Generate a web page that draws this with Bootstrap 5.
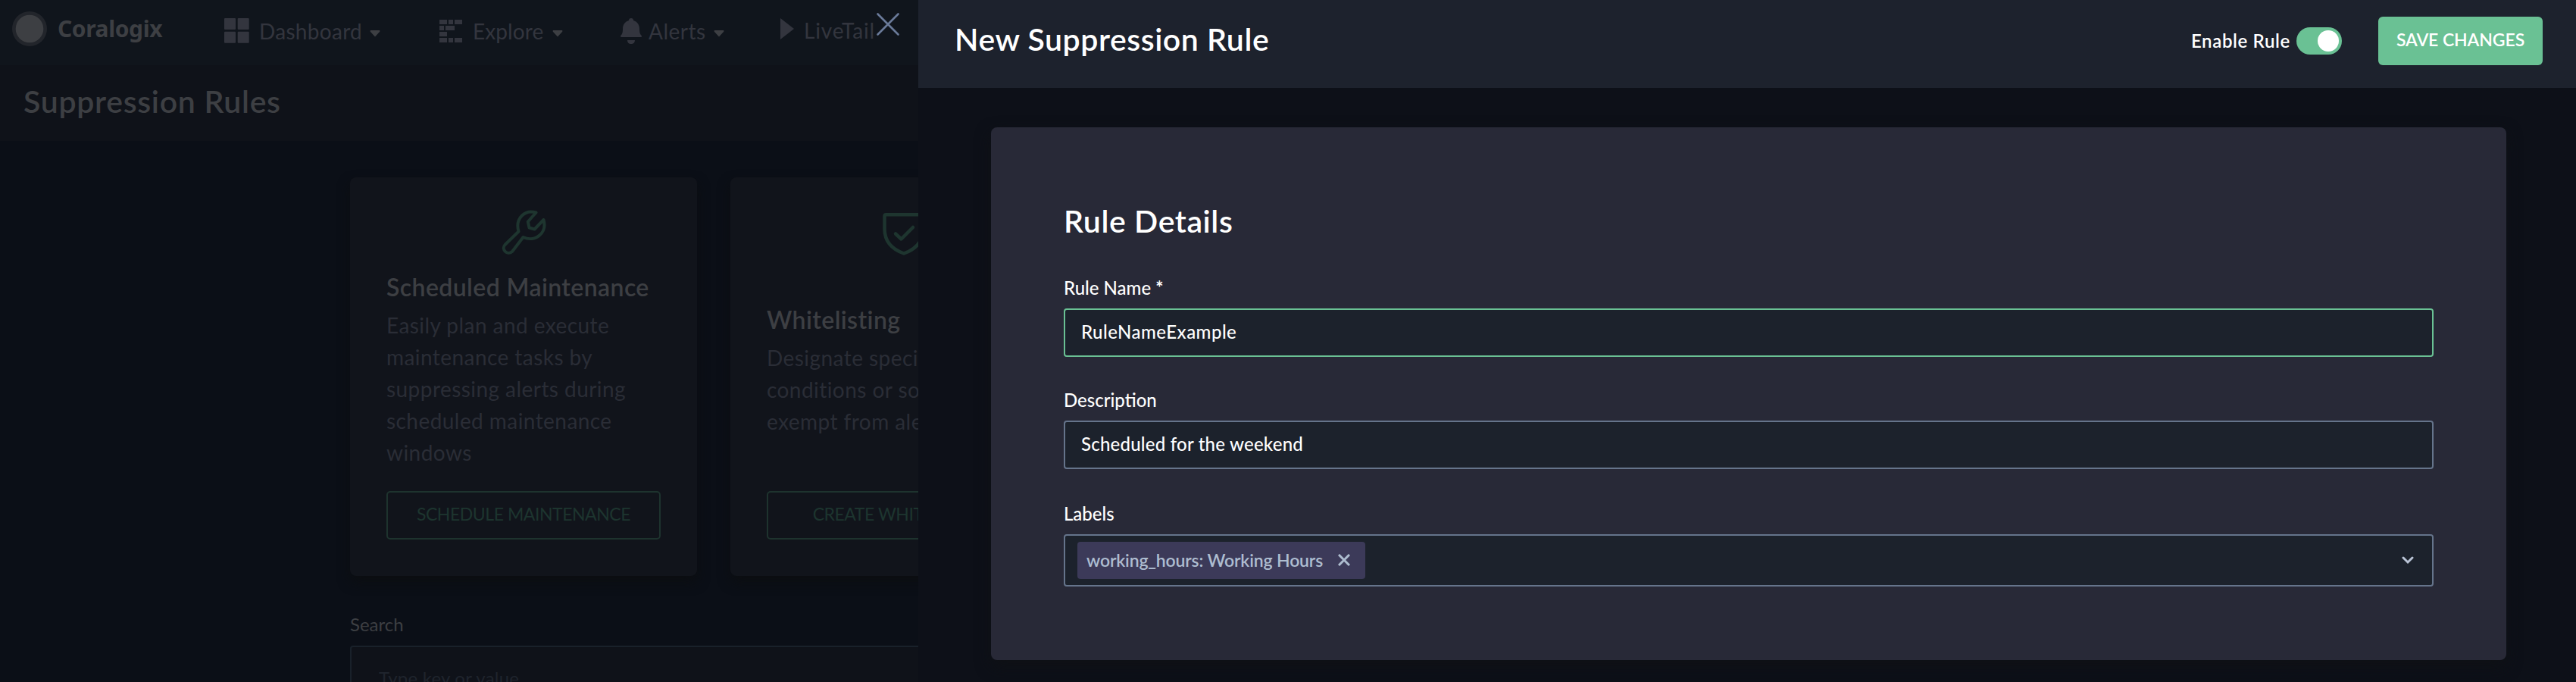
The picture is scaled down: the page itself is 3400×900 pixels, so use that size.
<!DOCTYPE html>
<html lang="en">
<head>
<meta charset="utf-8">
<title>New Suppression Rule</title>
<link href="https://cdn.jsdelivr.net/npm/bootstrap@5.3.0/dist/css/bootstrap.min.css" rel="stylesheet">
<style>
body{font-family:Lato,"Noto Sans",sans-serif;background:#0b0f17;color:#fff;width:3400px;height:900px;overflow:hidden;font-size:24px;line-height:36px}
h1,h2,h3,p{margin:0}
svg{display:block;flex:none}
.backdrop-page{width:1212px;height:900px;overflow:hidden;background:#0b0f17;color:#3d3f43;white-space:nowrap}
.topnav{height:86px;padding:0 0 5px 16px;background:#10151c;font-size:28px;line-height:40px;color:#33353e}
.brand{width:280px;gap:14px;padding-bottom:5px;font:700 30px/40px "Noto Sans",sans-serif;letter-spacing:-.4px;color:#3d3f43}
.n1{width:284px;letter-spacing:.3px}.n2{width:239px;letter-spacing:.1px}.n3{width:210px;letter-spacing:.5px}.n4{letter-spacing:.85px;padding-bottom:2px}
.caret{margin-top:8px;margin-left:10px}
.n2 .caret{margin-left:12px}
.close-x{left:1156px;top:16px}
.titlebar{height:100px;padding-left:31px;background:#0f1219}
.titlebar h1{font-size:41px;font-weight:600;line-height:96px;letter-spacing:.7px}
.workspace{padding:48px 0 0 462px}
.cards{gap:44px}
.tile{flex:none;width:458px;height:526px;padding:43px 48px 48px 48px;border-radius:8px;background:#11141b;box-shadow:0 8px 16px #0c0e11}
.tile h3{font-size:32px;font-weight:600;line-height:42px;letter-spacing:.4px;margin-bottom:8px}
.tile p{font-size:28px;line-height:42px;letter-spacing:.44px;color:#2a2d36}
.tile .btn{height:64px;padding:0 0 4px;border:2px solid #1e332e;border-radius:5px;color:#1d352f;font-size:23px;line-height:56px;letter-spacing:-.45px}
.search-label{margin-top:46px;margin-bottom:10px}
.search-box{width:1400px;height:85px;border:2px solid #19212a;border-radius:4px;background:#0f1219;padding:0 36px;font-size:24px;letter-spacing:.2px}
.search-box::placeholder{color:#1f242d;opacity:1}
.drawer{width:2188px;height:900px;background:#0d1018}
.drawer-head{height:116px;padding:0 44px 8px 48px;background:#1d222d}
.drawer-head h2{font-size:41px;font-weight:600;line-height:48px;letter-spacing:.55px;margin-top:-4px}
.enable{font-weight:600;letter-spacing:.65px;margin-right:8px;margin-top:-1px}
.toggle{width:60px;height:36px;border-radius:18px;background:#6ac194;padding:4px;margin-right:48px}
.toggle span{width:28px;height:28px;border-radius:50%;background:#fff}
.save{width:217px;height:64px;border:0;border-radius:6px;background:#6ac194;color:#fff;padding:0 0 3px;font-size:23px;font-weight:600;letter-spacing:-.1px}
.panel{margin:52px 92px 0 96px;height:703px;padding:100px 96px 0;border-radius:8px;background:#282937;box-shadow:0 8px 20px #0f1115}
.panel h2{font-size:41px;font-weight:600;line-height:48px;letter-spacing:.6px;margin-bottom:46px}
.panel label{font-weight:500;margin-bottom:9px;display:block}
.panel .form-control{height:64px;padding:0 21px 3px;border:2px solid #65748b;border-radius:4px;background:#1c222c;color:#fff;font-size:24px;font-weight:500;line-height:36px}
.panel .form-control.active-field{border-color:#6ac194}
.f-name{letter-spacing:.48px;margin-bottom:39px}
.f-desc{letter-spacing:.22px;margin-bottom:41px}
.select-box{height:69px;border:2px solid #65748b;border-radius:4px;background:#1c222c;padding:0 24px 0 16px}
.tag{width:380px;height:49px;border-radius:4px;background:#3c3a59;color:#aebdd0;padding:0 20px 2px 12px;font-size:23px;font-weight:600;letter-spacing:-.15px}
</style>
<script src="https://cdn.jsdelivr.net/npm/bootstrap@5.3.0/dist/js/bootstrap.bundle.min.js"></script>
</head>
<body>
<div class="d-flex">
<div class="backdrop-page position-relative flex-shrink-0">
  <nav class="topnav d-flex align-items-center">
    <div class="brand d-flex align-items-center"><svg width="46" height="46"><circle cx="23" cy="23" r="23" fill="#22252b"/><circle cx="23" cy="23" r="18.3" fill="#3d3f43"/></svg>Coralogix</div>
    <div class="n1 d-flex align-items-center"><svg width="46" height="33" fill="#33353e"><rect width="15" height="15" rx="1"/><rect x="17.700" width="15" height="15" rx="1"/><rect y="17.700" width="15" height="15" rx="1"/><rect x="17.700" y="17.700" width="15" height="15" rx="1"/></svg>Dashboard<svg class="caret" width="14" height="9"><path d="M1 0h12q1 1 0 2L7 8.500 1 2Q0 1 1 0z" fill="#3d3f43"/></svg></div>
    <div class="n2 d-flex align-items-center"><svg width="44" height="30" fill="#33353e"><path d="M0 0h10v6H0zM12 0h6v6h-6zM20 0h10v6H20zM0 8h6v6H0zM8 8h12v6H8zM0 16h10v6H0zM0 24h10v6H0zM12 24h6v6h-6zM20 24h10v6H20z"/></svg>Explore<svg class="caret" width="14" height="9"><path d="M1 0h12q1 1 0 2L7 8.500 1 2Q0 1 1 0z" fill="#3d3f43"/></svg></div>
    <div class="n3 d-flex align-items-center"><svg width="37" height="34" fill="#33353e"><path d="M14 0c2 0 3 1.200 3 3 5 1.500 8 5.500 8 11 0 5 .8 7 2.700 9 .8 1.200.2 2-1.200 2H1.500C.1 25-.5 24.200.3 23 2.200 21 3 19 3 14 3 8.500 6 4.500 11 3c0-1.800 1-3 3-3zM9 29h10c0 3-2 5-5 5s-5-2-5-5z"/></svg>Alerts<svg class="caret" width="14" height="9"><path d="M1 0h12q1 1 0 2L7 8.500 1 2Q0 1 1 0z" fill="#3d3f43"/></svg></div>
    <div class="n4 d-flex align-items-center"><svg class="mb-1" width="32" height="28"><path d="M1 0l18 14L1 28z" fill="#33353e"/></svg>LiveTail</div>
  </nav>
  <svg class="close-x position-absolute" width="32" height="32" stroke="#6a7a99" stroke-width="2.600" stroke-linecap="round"><path d="M2.500 2.500l27 27M29.500 2.500l-27 27"/></svg>
  <div class="titlebar"><h1>Suppression Rules</h1></div>
  <div class="workspace">
    <div class="cards d-flex">
      <div class="tile d-flex flex-column">
        <svg class="align-self-center" width="59" height="59" viewBox="0 0 59 59" fill="none" stroke="#1e352f" stroke-width="4" stroke-linejoin="round"><path d="M45.500 3.500C31 -1 17.500 11 22.500 28.500L4.500 46c-5.500 6 3 14.500 9.500 9L28.500 36C44 43 60.500 31 55.500 13L43.500 25.500 36.500 23.500 34.800 15.500z"/></svg>
        <div class="my-auto pb-2"><h3>Scheduled Maintenance</h3><p>Easily plan and execute<br>maintenance tasks by<br>suppressing alerts during<br>scheduled maintenance<br>windows</p></div>
        <button class="btn">SCHEDULE MAINTENANCE</button>
      </div>
      <div class="tile d-flex flex-column">
        <svg class="align-self-center" width="56" height="60" fill="none" stroke="#1e352f" stroke-width="4.500" stroke-linejoin="round" stroke-linecap="round"><path d="M4.500 6.300h47q2 0 2 2V25c0 17-10 27-25.500 32.500C12.500 52 2.500 42 2.500 25V8.300q0-2 2-2z"/><path d="M17 31.500l7.500 7L40 23"/></svg>
        <div class="my-auto pb-2"><h3>Whitelisting</h3><p>Designate specific<br>conditions or sources<br>exempt from alerts</p></div>
        <button class="btn">CREATE WHITELISTING</button>
      </div>
    </div>
    <div class="search-label">Search</div>
    <input class="search-box" placeholder="Type key or value">
  </div>
</div>
<main class="drawer flex-shrink-0">
  <header class="drawer-head d-flex align-items-center">
    <h2 class="me-auto">New Suppression Rule</h2>
    <span class="enable">Enable Rule</span>
    <div class="toggle d-flex justify-content-end"><span></span></div>
    <button class="save btn">SAVE CHANGES</button>
  </header>
  <section class="panel">
    <h2>Rule Details</h2>
    <label for="rn">Rule Name <b>*</b></label>
    <input id="rn" class="form-control active-field f-name" value="RuleNameExample">
    <label for="ds">Description</label>
    <input id="ds" class="form-control f-desc" value="Scheduled for the weekend">
    <label>Labels</label>
    <div class="select-box d-flex align-items-center justify-content-between">
      <div class="tag d-flex align-items-center justify-content-between"><span>working_hours: Working Hours</span><svg width="16" height="16" stroke="#aebdd0" stroke-width="3"><path d="M1 1l14 14M15 1L1 15"/></svg></div>
      <svg width="16" height="11" fill="none" stroke="#bac4d6" stroke-width="3" stroke-linecap="round"><path d="M2 2l6 6 6-6"/></svg>
    </div>
  </section>
</main>
</div>
</body>
</html>
